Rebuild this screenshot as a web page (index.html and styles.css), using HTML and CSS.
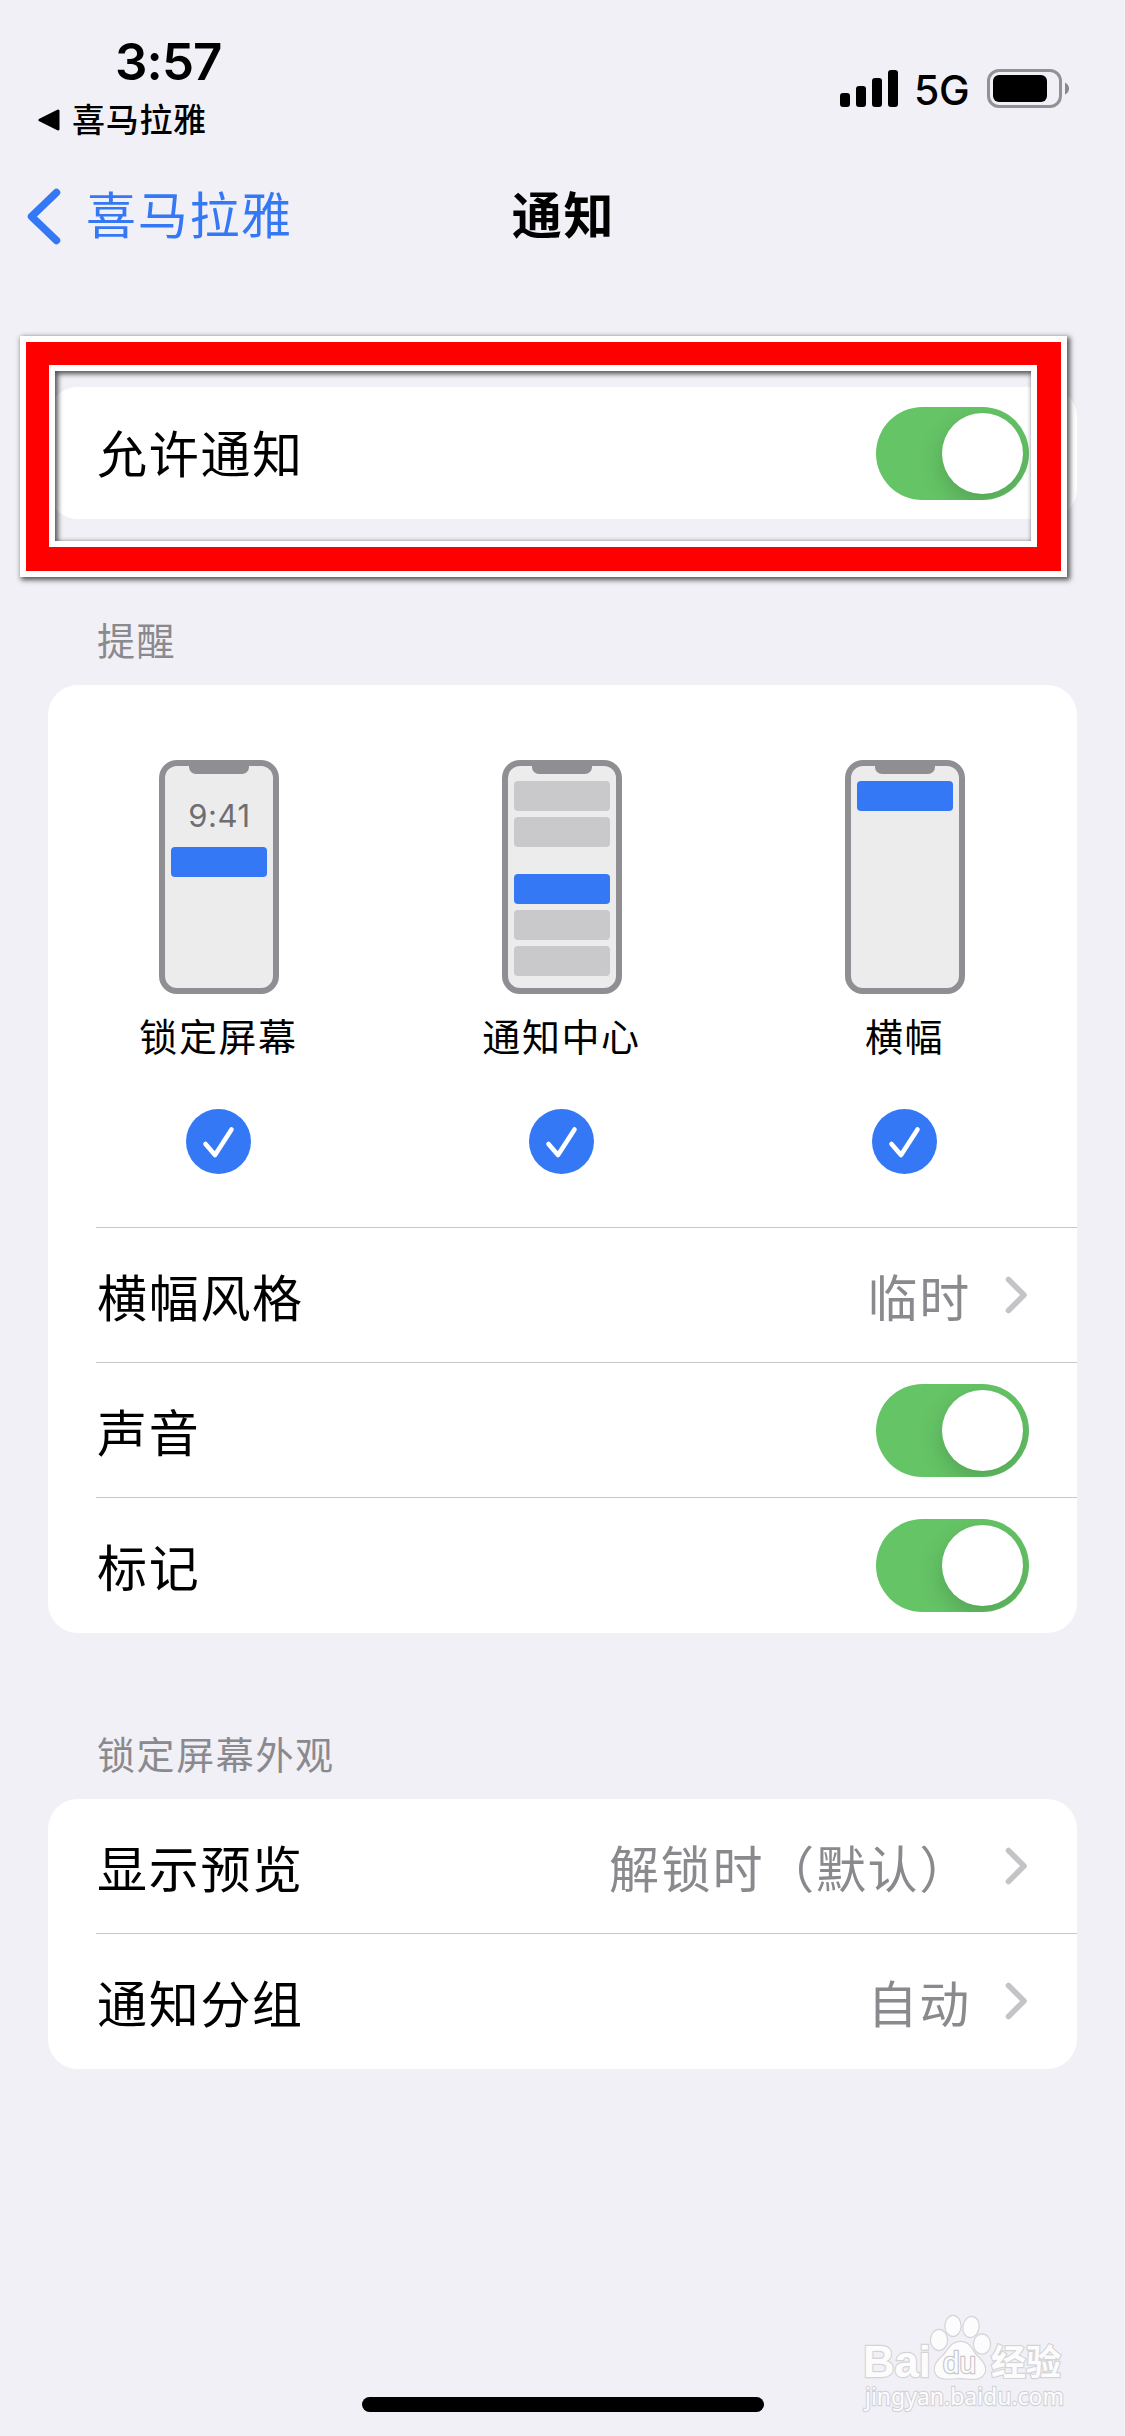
FILE: index.html
```html
<!DOCTYPE html>
<html lang="zh-CN">
  <head>
    <meta charset="UTF-8">
    <title>通知</title>
    <link rel="stylesheet" href="styles.css">
  </head>
  <body>
    <div class="status-bar">
      <div class="status-left">
        <div class="time">3:57</div>
        <div class="return-app">
          <svg width="22" height="22" viewBox="0 0 22 22"><path d="M2 11 L20 2 V20 Z" stroke="#000" stroke-width="3" stroke-linejoin="round"/></svg>
          <span>喜马拉雅</span>
        </div>
      </div>
      <div class="status-right">
        <svg width="58" height="37" viewBox="0 0 58 37">
          <rect x="0" y="23" width="10" height="14" rx="3"/>
          <rect x="16" y="16" width="10" height="21" rx="3"/>
          <rect x="32" y="8" width="10" height="29" rx="3"/>
          <rect x="48" y="0" width="10" height="37" rx="3"/>
        </svg>
        <span class="network">5G</span>
        <svg width="82" height="39" viewBox="0 0 82 39">
          <rect x="1.5" y="1.5" width="72" height="36" rx="10.5" fill="none" stroke="#929296" stroke-width="3"/>
          <rect x="6" y="6" width="54" height="27" rx="6"/>
          <path d="M78 13.5 Q82 15.5 82 19.5 Q82 23.5 78 25.5 Z" fill="#89898c"/>
        </svg>
      </div>
    </div>

    <div class="nav-bar">
      <a class="back">
        <svg width="34" height="57" viewBox="0 0 34 57"><path d="M29.5 4.5 L4.5 28.5 L29.5 52.5" fill="none" stroke="#3478f6" stroke-width="7.5" stroke-linecap="round" stroke-linejoin="round"/></svg>
        <span>喜马拉雅</span>
      </a>
      <h1>通知</h1>
    </div>

    <div class="allow">
      <div class="card">
        <div class="row">
          <span class="name">允许通知</span>
          <div class="toggle"><div class="knob"></div></div>
        </div>
      </div>
      <!-- red frame round the first row -->
      <div class="frame"><div class="frame-red"><div class="frame-inner"></div></div></div>
    </div>

    <div class="group-title">提醒</div>
    <div class="card">
      <div class="alerts">
        <div class="alert">
          <div class="phone">
            <div class="notch"></div>
            <div class="clock">9:41</div>
            <div class="block blue"></div>
          </div>
          <div class="alert-name">锁定屏幕</div>
          <svg class="check" width="65" height="65" viewBox="0 0 65 65"><circle cx="32.5" cy="32.5" r="32.5" fill="#3478f6"/><path d="M19.5 35 L29 46 L45.5 20.5" fill="none" stroke="#fff" stroke-width="4.6" stroke-linecap="round" stroke-linejoin="round"/></svg>
        </div>
        <div class="alert">
          <div class="phone">
            <div class="notch"></div>
            <div class="block"></div>
            <div class="block"></div>
            <div class="block blue current"></div>
            <div class="block"></div>
            <div class="block"></div>
          </div>
          <div class="alert-name">通知中心</div>
          <svg class="check" width="65" height="65" viewBox="0 0 65 65"><circle cx="32.5" cy="32.5" r="32.5" fill="#3478f6"/><path d="M19.5 35 L29 46 L45.5 20.5" fill="none" stroke="#fff" stroke-width="4.6" stroke-linecap="round" stroke-linejoin="round"/></svg>
        </div>
        <div class="alert">
          <div class="phone">
            <div class="notch"></div>
            <div class="block blue"></div>
          </div>
          <div class="alert-name">横幅</div>
          <svg class="check" width="65" height="65" viewBox="0 0 65 65"><circle cx="32.5" cy="32.5" r="32.5" fill="#3478f6"/><path d="M19.5 35 L29 46 L45.5 20.5" fill="none" stroke="#fff" stroke-width="4.6" stroke-linecap="round" stroke-linejoin="round"/></svg>
        </div>
      </div>
      <div class="row line">
        <span class="name">横幅风格</span>
        <span class="value">临时</span>
        <svg class="arrow" width="23" height="38" viewBox="0 0 23 38"><path d="M3.5 3.5 L19 19 L3.5 34.5" fill="none" stroke="#c4c4c7" stroke-width="5.6" stroke-linecap="round" stroke-linejoin="round"/></svg>
      </div>
      <div class="row line">
        <span class="name">声音</span>
        <div class="toggle"><div class="knob"></div></div>
      </div>
      <div class="row line">
        <span class="name">标记</span>
        <div class="toggle"><div class="knob"></div></div>
      </div>
    </div>

    <div class="group-title">锁定屏幕外观</div>
    <div class="card">
      <div class="row">
        <span class="name">显示预览</span>
        <span class="value">解锁时（默认）</span>
        <svg class="arrow" width="23" height="38" viewBox="0 0 23 38"><path d="M3.5 3.5 L19 19 L3.5 34.5" fill="none" stroke="#c4c4c7" stroke-width="5.6" stroke-linecap="round" stroke-linejoin="round"/></svg>
      </div>
      <div class="row line">
        <span class="name">通知分组</span>
        <span class="value">自动</span>
        <svg class="arrow" width="23" height="38" viewBox="0 0 23 38"><path d="M3.5 3.5 L19 19 L3.5 34.5" fill="none" stroke="#c4c4c7" stroke-width="5.6" stroke-linecap="round" stroke-linejoin="round"/></svg>
      </div>
    </div>

    <svg class="watermark" width="213" height="106" viewBox="0 0 213 106">
      <g class="mark">
        <text class="logo" x="4" y="68" textLength="68" lengthAdjust="spacingAndGlyphs">Bai</text>
        <ellipse cx="80" cy="31" rx="8" ry="10"/>
        <ellipse cx="94" cy="17" rx="7.5" ry="10"/>
        <ellipse cx="112" cy="18" rx="7.5" ry="10" transform="rotate(10 112 18)"/>
        <ellipse cx="123" cy="35" rx="8" ry="9.5"/>
        <path d="M101 33 C92 33 89 42 84 47 C78 52 75 57 76 62 C78 71 87 70 101 69 C114 70 123 72 126 62 C127 54 120 50 116 45 C112 39 110 33 101 33 Z"/>
        <text class="du" x="84" y="64" textLength="33" lengthAdjust="spacingAndGlyphs">du</text>
        <text class="exp" x="132" y="66" textLength="70" lengthAdjust="spacingAndGlyphs">经验</text>
        <text class="url" x="6" y="96" textLength="199" lengthAdjust="spacingAndGlyphs">jingyan.baidu.com</text>
      </g>
    </svg>
    <div class="home-bar"></div>
  </body>
</html>
```
FILE: styles.css
```css
body, html {
  margin: 0;
}

body {
  width: 1125px;
  height: 2436px;
  position: relative;
  overflow: hidden;
  box-sizing: border-box;
  background: #f1f0f6;
  color: #000;
  font-family: "Noto Sans CJK SC", sans-serif;
  font-size: 50px;
}

svg {
  display: block;
  flex: none;
}

.status-bar {
  display: flex;
  justify-content: space-between;
  height: 150px;
}

.status-left {
  padding: 32px 0 0 38px;
}

.time {
  margin-left: 77px;
  font-family: Inter, sans-serif;
  font-size: 51px;
  font-weight: 600;
  line-height: 60px;
  letter-spacing: -0.9px;
}

.return-app {
  display: flex;
  align-items: center;
  gap: 12px;
  margin-top: 8px;
  font-size: 33px;
  font-weight: 500;
  line-height: 38px;
  letter-spacing: 0.7px;
}

.return-app svg {
  margin-top: 3px;
}

.return-app span {
  margin-top: -1px;
}

.status-right {
  display: flex;
  align-items: center;
  height: 39px;
  padding: 69px 56px 0 0;
}

.network {
  width: 59px;
  margin: 3px 14px 0 16px;
  font-family: Inter, sans-serif;
  font-size: 41px;
  font-weight: 500;
  line-height: 39px;
  letter-spacing: -0.4px;
}

.nav-bar {
  display: grid;
  grid-template-columns: 1fr auto 1fr;
  align-items: center;
  height: 132px;
}

.back {
  display: flex;
  align-items: center;
  gap: 25px;
  padding-left: 27px;
  color: #3478f6;
}

.back span, h1 {
  margin: -8px 0 0;
  font-size: 50px;
  line-height: 72px;
  letter-spacing: 1.7px;
}

h1 {
  padding-left: 2px;
  font-weight: 600;
}

.allow {
  position: relative;
  margin-top: 105px;
}

.card {
  margin: 0 48px;
  border-radius: 30px;
  background: #fff;
}

.row {
  position: relative;
  display: flex;
  align-items: center;
  height: 135px;
  padding: 0 48px;
  line-height: 72px;
  letter-spacing: 1.7px;
}

.allow .row {
  height: 132px;
}

/* separators start at the text, not at the card edge */
.line::before {
  content: "";
  position: absolute;
  left: 48px;
  right: 0;
  top: -1px;
  height: 1px;
  background: #c6c6c8;
}

.name {
  flex: 1;
  padding: 0 0 2px 1px;
}

.allow .name {
  padding-bottom: 5px;
}

.value {
  padding-bottom: 2px;
  color: #8a8a8e;
}

.arrow {
  margin: 0 1px 1px 34px;
}

.toggle {
  width: 153px;
  height: 93px;
  overflow: hidden;
  box-sizing: border-box;
  padding: 6px;
  border-radius: 47px;
  background: #65c466;
}

.knob {
  width: 81px;
  height: 81px;
  margin-left: auto;
  border-radius: 50%;
  background: #fff;
  box-shadow: 0 9px 24px rgba(0, 0, 0, 0.17);
}

.frame {
  position: absolute;
  left: 20px;
  top: -51px;
  width: 1047px;
  height: 241px;
  box-sizing: border-box;
  border: 6px solid #fff;
  box-shadow: 2px 2px 5px 1px rgba(0, 0, 0, 0.65);
}

.frame-red {
  height: 100%;
  box-sizing: border-box;
  border: 24px solid #f00;
  border-left-width: 23px;
  border-top-width: 23px;
}

.frame-inner {
  height: 100%;
  box-sizing: border-box;
  border: 6px solid #fff;
  box-shadow: inset 2px 2px 5px 1px rgba(0, 0, 0, 0.65);
}

.group-title {
  height: 60px;
  padding: 92px 97px 14px;
  color: #8a8a8e;
  font-size: 38px;
  line-height: 56px;
  letter-spacing: 1.6px;
}

/* the columns sit one pixel left of centre */
.alerts {
  display: grid;
  grid-template-columns: 1fr 1fr 1fr;
  height: 543px;
  margin-left: -1px;
  margin-right: 1px;
}

.alert {
  display: flex;
  flex-direction: column;
  align-items: center;
  padding-top: 75px;
}

.phone {
  display: flex;
  flex-direction: column;
  align-items: center;
  gap: 6px;
  width: 120px;
  height: 234px;
  box-sizing: border-box;
  border: 6px solid #8e8e93;
  border-radius: 18px;
  background: #ececec;
}

.notch {
  width: 60px;
  height: 8px;
  margin-bottom: 1px;
  border-radius: 0 0 7px 7px;
  background: #8e8e93;
}

.clock {
  height: 60px;
  padding-left: 2px;
  color: #6e6e72;
  font-family: Inter, sans-serif;
  font-size: 31px;
  line-height: 70px;
  letter-spacing: 0.6px;
}

.block {
  width: 96px;
  height: 30px;
  border-radius: 4px;
  background: #c9c9cb;
}

.blue {
  background: #3478f6;
}

.current {
  margin-top: 21px;
}

.alert-name {
  margin-top: 13px;
  font-size: 38px;
  line-height: 56px;
  letter-spacing: 1.6px;
}

.check {
  margin-top: 46px;
}

.watermark {
  position: absolute;
  left: 859px;
  top: 2309px;
}

.mark {
  fill: #fcfcfd;
  stroke: #d4d4d8;
  stroke-width: 2.4;
  paint-order: stroke;
}

.logo {
  font: bold 45px "Liberation Sans", sans-serif;
}

.du {
  font: 29px "Liberation Sans", sans-serif;
  stroke: #c8c8cc;
}

.exp {
  font: bold 35px "Noto Sans CJK SC", sans-serif;
}

.url {
  font: 24px "Noto Sans", sans-serif;
}

.home-bar {
  position: absolute;
  left: 362px;
  bottom: 24px;
  width: 402px;
  height: 15px;
  border-radius: 8px;
  background: #000;
}
```
